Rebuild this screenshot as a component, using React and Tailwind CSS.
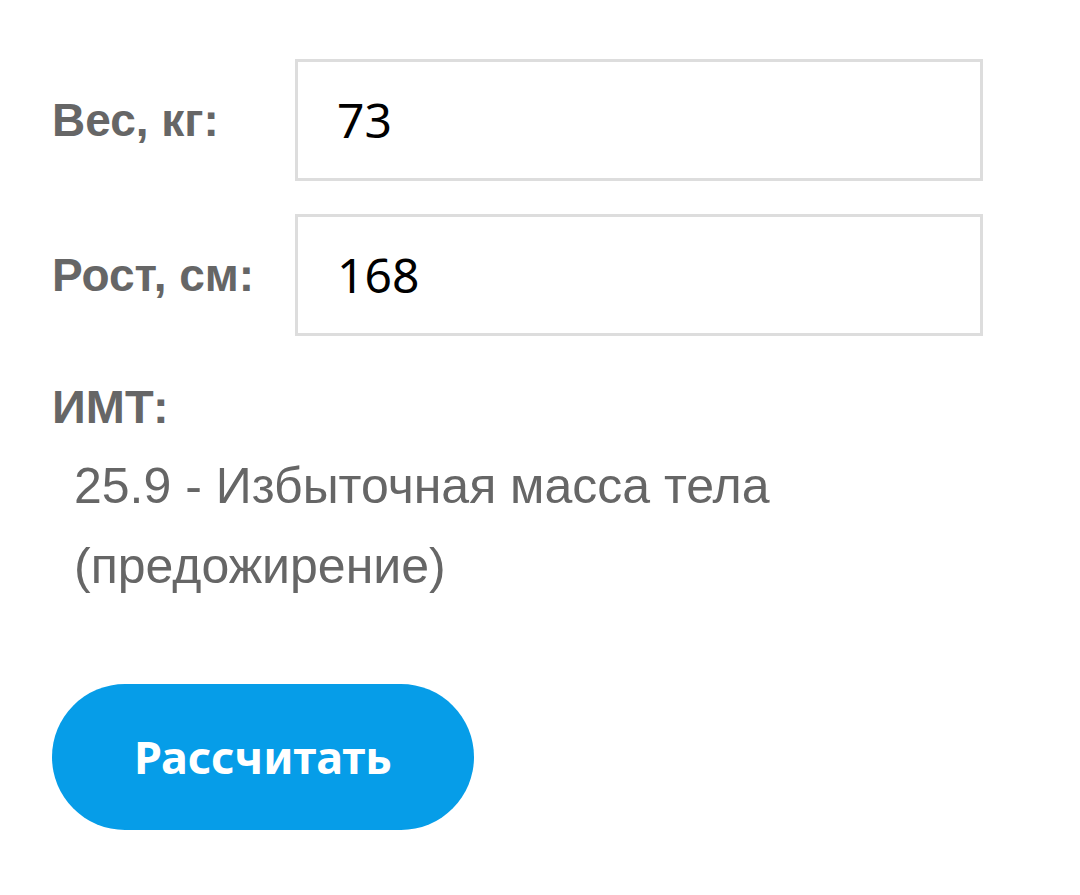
import React from 'react';

const Field = ({ label, value }) => (
  <div className="flex items-center">
    <label className="w-[243px] shrink-0 text-[46px] font-bold text-[#666666] leading-none [font-family:'Liberation_Sans',sans-serif]">
      {label}
    </label>
    <div className="w-[688px] h-[122px] border-[3px] border-[#dddddd] bg-white flex items-center pl-[39px]">
      <span className="text-[48px] text-black leading-none [font-family:'Noto_Sans',sans-serif]">{value}</span>
    </div>
  </div>
);

export default function App() {
  return (
    <div className="w-[1080px] h-[895px] bg-white pl-[52px] pt-[59px]">
      <div className="flex flex-col gap-[33px]">
        <Field label="Вес, кг:" value="73" />
        <Field label="Рост, см:" value="168" />
      </div>
      <div className="mt-[41px] text-[47px] font-bold text-[#666666] leading-[60px] [font-family:'Liberation_Sans',sans-serif]">
        ИМТ:
      </div>
      <p className="mt-[9px] pl-[22px] w-[800px] text-[50px] text-[#666666] leading-[80px] [font-family:'Liberation_Sans',sans-serif]">
        25.9 - Избыточная масса тела (предожирение)
      </p>
      <button className="mt-[78px] w-[422px] h-[146px] rounded-full bg-[#069de8] text-white text-[45px] font-bold [font-family:'Noto_Sans',sans-serif]">
        Рассчитать
      </button>
    </div>
  );
}
